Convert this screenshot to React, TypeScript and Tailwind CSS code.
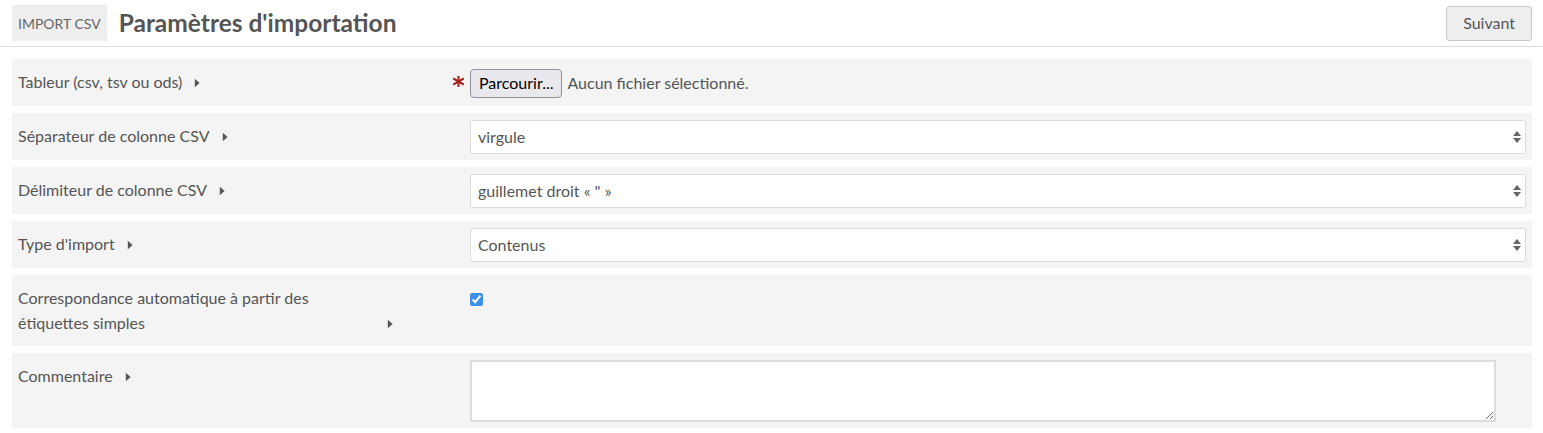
import React from "react";

type Row = {
  label: string;
  required?: boolean;
  field: React.ReactNode;
};

function Caret() {
  return (
    <svg width="6" height="10" viewBox="0 0 6 10" className="inline-block ml-[12px] align-[0px]">
      <path d="M0.8 0.8 L5.6 5 L0.8 9.2 Z" fill="#555" />
    </svg>
  );
}

function SelectBox({ value }: { value: string }) {
  return (
    <div className="relative w-full">
      <select
        defaultValue={value}
        className="w-full h-[34px] appearance-none bg-white border border-[#dcdcdc] rounded-[3px] pl-[7px] pr-8 text-[16px] text-[#555] outline-none"
      >
        <option>{value}</option>
      </select>
      <svg
        width="10"
        height="14"
        viewBox="0 0 10 14"
        className="absolute right-[4px] top-[10px] pointer-events-none"
      >
        <path d="M1 6 L5 1 L9 6 Z" fill="#666" />
        <path d="M1 8 L5 13 L9 8 Z" fill="#666" />
      </svg>
    </div>
  );
}

function FileField() {
  return (
    <div className="flex items-center h-[34px] gap-[5px]">
      <button
        type="button"
        className="h-[29px] px-[8px] bg-[#e9e9ed] border border-[#8f8f9d] rounded-[4px] text-[16px] text-black leading-none"
      >
        Parcourir...
      </button>
      <span className="text-[16px] text-[#555]">Aucun fichier sélectionné.</span>
    </div>
  );
}

const rows: Row[] = [
  { label: "Tableur (csv, tsv ou ods)", required: true, field: <FileField /> },
  { label: "Séparateur de colonne CSV", field: <SelectBox value="virgule" /> },
  { label: "Délimiteur de colonne CSV", field: <SelectBox value={'guillemet droit « " »'} /> },
  { label: "Type d'import", field: <SelectBox value="Contenus" /> },
  {
    label: "Correspondance automatique à partir des étiquettes simples",
    field: (
      <div className="pt-[11px]">
        <input type="checkbox" defaultChecked className="w-[13px] h-[13px] m-0 block accent-[#3d8fe8]" />
      </div>
    ),
  },
  {
    label: "Commentaire",
    field: (
      <div className="pr-[30px]">
        <textarea className="block w-full h-[62px] bg-white border-2 border-[#dcdcdc] outline-none resize-y" />
      </div>
    ),
  },
];

export default function App() {
  return (
    <div className="bg-white min-h-screen text-[#555]" style={{ fontFamily: "Lato, 'Open Sans', sans-serif" }}>
      <div className="flex items-center justify-between pl-[12px] pr-[11px] pt-[5px] pb-[5px] border-b border-[#ddd]">
        <div className="flex items-center gap-[12px]">
          <span className="h-[36px] px-[6px] flex items-center bg-[#eeeeee] text-[14px] uppercase text-[#666]">
            Import CSV
          </span>
          <h1 className="text-[24.5px] font-bold text-[#555] leading-none">Paramètres d'importation</h1>
        </div>
        <button
          type="button"
          className="h-[35px] px-[16px] bg-[#eeeeee] border border-[#c8c8c8] rounded-[3px] text-[16px] text-[#555]"
        >
          Suivant
        </button>
      </div>

      <div className="pl-[12px] pr-[11px] pt-[12px] flex flex-col gap-[7px]">
        {rows.map((r) => (
          <div key={r.label} className="flex bg-[#f4f4f4]">
            <div className="w-[428px] shrink-0 pl-[6px] pt-[11px] pb-[11px] text-[16px] leading-[24.5px] text-[#555]">
              <span className="inline-block max-w-[357px]">{r.label}</span>
              <Caret />
            </div>
            <div className="w-[30px] shrink-0 pt-[17px] flex justify-center">
              {r.required && (
                <svg width="11" height="11" viewBox="0 0 12 12" className="ml-[6px]">
                  <g stroke="#a51d1d" strokeWidth="2.2" strokeLinecap="square">
                    <line x1="6" y1="0.5" x2="6" y2="11.5" />
                    <line x1="1.2" y1="3.2" x2="10.8" y2="8.8" />
                    <line x1="1.2" y1="8.8" x2="10.8" y2="3.2" />
                  </g>
                </svg>
              )}
            </div>
            <div className="flex-1 pt-[7px] pb-[6px] pr-[6px]">{r.field}</div>
          </div>
        ))}
      </div>
    </div>
  );
}
